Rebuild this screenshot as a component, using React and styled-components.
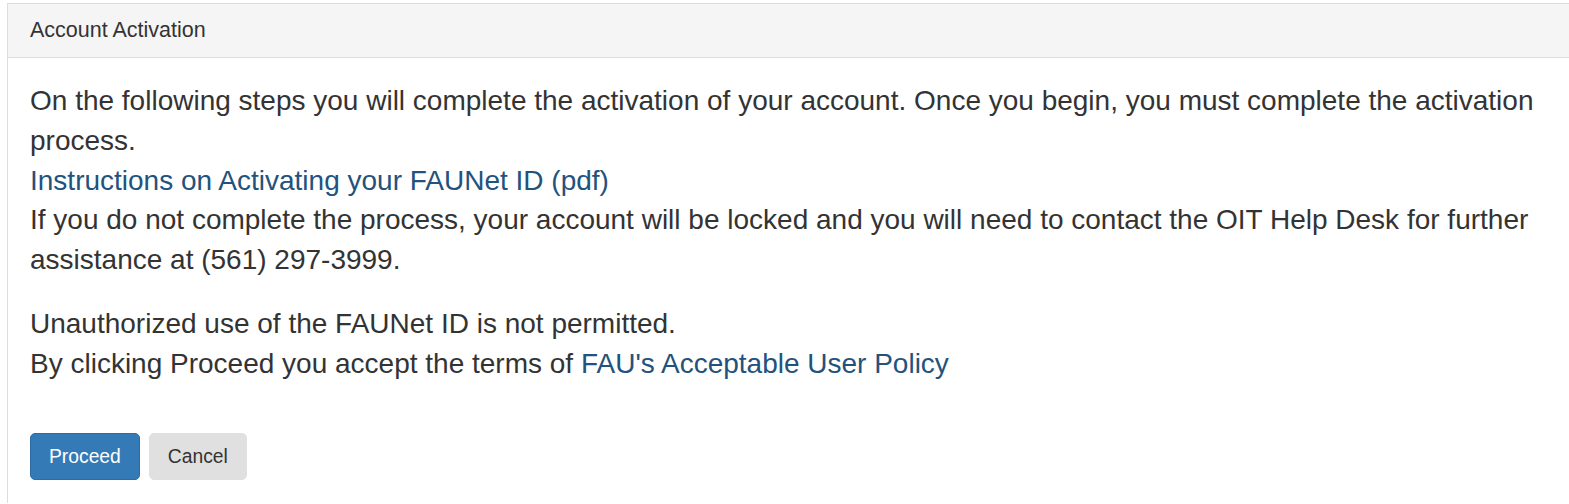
import React from 'react'
import styled, { createGlobalStyle } from 'styled-components'

const colors = {
  text: '#333333',
  border: '#dddddd',
  headingBg: '#f5f5f5',
  link: '#23527c',
  primary: '#337ab7',
  primaryBorder: '#2e6da4',
  cancel: '#e0e0e0',
}

const GlobalStyle = createGlobalStyle`
  html, body {
    margin: 0;
    overflow: hidden;
    background: #ffffff;
  }
  body {
    font-family: "Liberation Sans", Arial, sans-serif;
    color: ${colors.text};
  }
`

// panel runs off the right and bottom edge of the shot, so only left/top borders show
const Panel = styled.section`
  border: 1px solid ${colors.border};
  border-right: none;
  border-bottom: none;
  margin: 3px 0 0 7px;
  min-height: calc(100vh - 4px);
  box-sizing: border-box;
  background: #ffffff;
`

const Heading = styled.header`
  background: ${colors.headingBg};
  border-bottom: 1px solid ${colors.border};
  height: 53px;
  display: flex;
  align-items: center;
  padding: 0 22px;
  font-size: 21.5px;
`

const Body = styled.div`
  padding: 23px 22px 0;
  font-size: 28px;
  line-height: 1.42;
`

const Paragraph = styled.p`
  margin: 0;
  & + & {
    margin-top: 24px;
  }
`

const Link = styled.a`
  color: ${colors.link};
  text-decoration: none;
`

const Actions = styled.div`
  display: flex;
  gap: 9px;
  margin-top: 50px;
`

const Button = styled.button`
  font-family: "Liberation Sans", Arial, sans-serif;
  font-size: 19.3px;
  height: 47px;
  padding: 0 18px;
  border-radius: 5px;
  border: 1px solid ${(p) => (p.$primary ? colors.primaryBorder : colors.cancel)};
  background: ${(p) => (p.$primary ? colors.primary : colors.cancel)};
  color: ${(p) => (p.$primary ? '#ffffff' : colors.text)};
  cursor: pointer;
`

const App = () => (
  <>
    <GlobalStyle />
    <Panel>
      <Heading>Account Activation</Heading>
      <Body>
        <Paragraph>
          On the following steps you will complete the activation of your account. Once you begin, you must complete the activation process.
          <br />
          <Link href="#">Instructions on Activating your FAUNet ID (pdf)</Link>
          <br />
          If you do not complete the process, your account will be locked and you will need to contact the OIT Help Desk for further assistance at (561) 297-3999.
        </Paragraph>
        <Paragraph>
          Unauthorized use of the FAUNet ID is not permitted.
          <br />
          By clicking Proceed you accept the terms of <Link href="#">FAU's Acceptable User Policy</Link>
        </Paragraph>
        <Actions>
          <Button $primary>Proceed</Button>
          <Button>Cancel</Button>
        </Actions>
      </Body>
    </Panel>
  </>
)

export default App
